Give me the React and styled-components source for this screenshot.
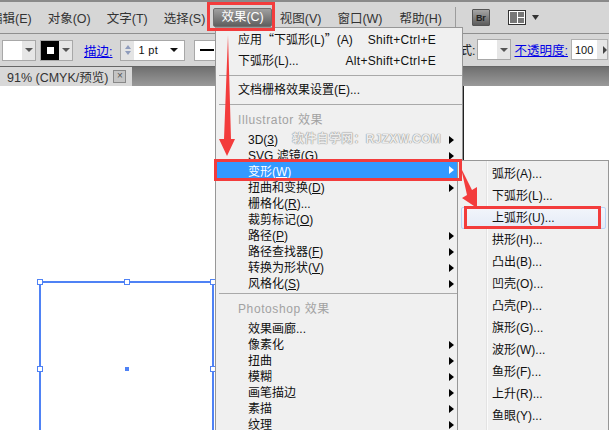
import React from "react";
import styled, { createGlobalStyle } from "styled-components";

const Global = createGlobalStyle`
  html, body { margin: 0; padding: 0; background: #fff; }
  body { font-family: "Liberation Sans", "Noto Sans CJK SC", sans-serif; font-size: 12px; color: #111; }
`;
const Page = styled.div`
  position: relative; width: 609px; height: 430px; overflow: hidden;
  display: flex; flex-direction: column; background: #fff;
`;
const MenuBar = styled.div`
  height: 31px; flex: 0 0 31px; border-top: 2px solid #8a8a8a; background: #d6d6d6; box-sizing: content-box;
  display: flex; align-items: center; color: #333; font-size: 12.5px;
`;
const MenuLabel = styled.span`
  margin-left: ${p => p.$gap}px; white-space: nowrap;
  ${p => p.$active && `
    background: linear-gradient(#a0a0a0, #5f5f5f); color: #fff; border-radius: 2px; line-height: 15px;
    padding: 1px 7px; margin-right: -7px; border: 1px solid #6f6f6f;`}
`;
const BarDivider = styled.i`
  width: 1px; height: 22px; background: #9c9c9c; margin-left: 13px; flex-shrink: 0;
`;
const BrBadge = styled.span`
  margin-left: 16px; width: 16px; height: 15px; border: 1px solid #555; border-radius: 1px; flex-shrink: 0;
  background: linear-gradient(#a5a5a5, #5c5c5c); color: #222; font: bold 9px "Liberation Sans", sans-serif;
  display: flex; align-items: center; justify-content: center;
`;
const LayoutIcon = styled.svg` margin-left: 18px; flex-shrink: 0; `;
const ControlBar = styled.div`
  height: 33px; flex: 0 0 33px; background: #d6d6d6; border-top: 1px solid #8f8f8f; box-sizing: border-box;
  display: flex; align-items: center;
`;
const Swatch = styled.div`
  display: flex; height: 21px; margin-left: ${p => p.$gap}px; border: 1px solid #a8a8a8; box-sizing: border-box; background: #e6e6e6; flex-shrink: 0;
`;
const SwatchFace = styled.div`
  width: ${p => p.$w}px; background: ${p => p.$black ? "#000" : "#fff"};
  display: flex; align-items: center; justify-content: center;
  &::after { content: ""; width: 7px; height: 7px; background: ${p => p.$black ? "#fff" : "transparent"}; }
`;
const SwatchArrow = styled.div`
  width: 13px; display: flex; align-items: center; justify-content: center;
  &::after { content: ""; border: 4px solid transparent; border-top: 4px solid #555; border-bottom: 0; }
`;
const LinkLabel = styled.span`
  color: #0000e6; text-decoration: underline; margin-left: ${p => p.$gap}px; font-size: 12.5px; white-space: nowrap;
`;
const Stepper = styled.div`
  margin-left: 8px; width: 65px; height: 21px; border: 1px solid #a8a8a8; background: #fff; box-sizing: border-box;
  display: flex; align-items: center; font-size: 11px; flex-shrink: 0;
`;
const StepButtons = styled.div`
  width: 13px; height: 100%; background: #e4e4e4; display: flex; flex-direction: column; align-items: center; justify-content: center; gap: 2px;
  &::before { content: ""; border: 3px solid transparent; border-bottom: 4px solid #8f9cbc; border-top: 0; }
  &::after { content: ""; border: 3px solid transparent; border-top: 4px solid #8f9cbc; border-bottom: 0; }
`;
const StepValue = styled.span` flex: 1; padding-left: 4px; letter-spacing: .3px; `;
const StepCaret = styled.i`
  margin-right: 6px; border: 4px solid transparent; border-top: 4px solid #111; border-bottom: 0;
`;
const StrokePreview = styled.div`
  margin-left: 9px; width: 60px; height: 21px; background: #fff; border: 1px solid #a8a8a8; box-sizing: border-box;
  display: flex; align-items: center; padding-left: 5px; flex-shrink: 0;
  &::after { content: ""; width: 14px; height: 2px; background: #000; }
`;
const RightControls = styled.div`
  position: absolute; left: 447px; top: 33px; width: 162px; height: 33px; display: flex; align-items: center; font-size: 12.5px;
`;
const StyleTail = styled.span` color: #222; white-space: nowrap; `;
const OpacityBox = styled.div`
  margin-left: 3px; width: 37px; height: 21px; border: 1px solid #b0b0b0; box-sizing: border-box; background: #e6e6e6;
  display: flex; align-items: center; font-size: 11px; flex-shrink: 0;
`;
const OpacityValue = styled.span` width: 25px; height: 100%; background: #fff; display: flex; align-items: center; padding-left: 3px; box-sizing: border-box; `;
const OpacityCaret = styled.i`
  margin-left: 6px; border: 4px solid transparent; border-left: 4px solid #444; border-right: 0;
`;
const TabBar = styled.div`
  height: 20px; flex: 0 0 20px; background: linear-gradient(#6f6f6f, #9a9a9a); display: flex; border-top: 1px solid #666; box-sizing: border-box;
`;
const DocTab = styled.div`
  width: 132px; background: #d8d8d8; display: flex; align-items: center; padding-left: 7px; box-sizing: border-box; color: #333; font-size: 12.5px; white-space: nowrap;
`;
const TabClose = styled.span`
  width: 11px; height: 11px; border: 1px solid #888; background: #c4c4c4; color: #555; font-size: 10px; line-height: 10px; text-align: center; margin-left: 5px; flex-shrink: 0;
`;
const Canvas = styled.div` position: relative; flex: 1; background: #fff; `;
const Selection = styled.div`
  position: absolute; left: 39px; top: 195px; width: 175px; height: 170px; box-sizing: border-box;
  border: solid #4f82f5; border-width: 2px 2px 0 2px;
`;
const Handle = styled.i`
  position: absolute; left: ${p => p.$x}px; top: ${p => p.$y}px; width: 4px; height: 4px;
  background: #fff; border: 1px solid #4f82f5;
`;
const CenterDot = styled.i`
  position: absolute; left: 125px; top: 281px; width: 4px; height: 4px; background: #4f82f5;
`;
const CanvasEdge = styled.i`
  position: absolute; left: 463px; top: 86px; width: 1px; height: 74px; background: #222;
`;
const Menu = styled.div`
  position: absolute; left: ${p => p.$x}px; top: ${p => p.$y}px; width: ${p => p.$w}px; height: ${p => p.$h}px;
  box-sizing: border-box; background: #f0f0f0; border: 1px solid #979797; border-bottom: 0;
  padding-top: ${p => p.$pad}px; display: flex; flex-direction: column;
  ${p => p.$gutter && `&::before { content: ""; position: absolute; left: 29px; top: 0; bottom: 0; width: 1px; background: #fbfbfb; box-shadow: -1px 0 0 #e3e3e3; }`}
`;
const Row = styled.div`
  position: relative; flex: 0 0 ${p => p.$h}px; min-height: 0; line-height: 16px; display: flex; align-items: center; padding-left: ${p => p.$indent}px;
  color: ${p => p.$active ? "#fff" : "#111"}; white-space: nowrap; font-size: 12px;
  & > * { position: relative; }
  ${p => p.$active && `&::before { content: ""; position: absolute; left: 0; right: 0; top: -2px; bottom: 2px; background: #3399ff; }`}
  ${p => p.$hover && `&::before { content: ""; position: absolute; left: 3px; right: 2px; top: 0; bottom: 0; background: linear-gradient(#f2f5fb, #e4ebf7); border: 1px solid #b8d4f6; border-radius: 2px; }`}
`;
const RowText = styled.span``;
const WideQuote = styled.span` font-family: "Noto Sans CJK SC", sans-serif; display: inline-block; width: 12px; text-align: ${p => p.$align}; `;
const Shortcut = styled.span` position: absolute !important; right: 26px; letter-spacing: .3px; `;
const SubCaret = styled.i`
  position: absolute !important; right: 8px; top: 50%; margin-top: ${p => p.$active ? -6 : -4}px;
  border: 4px solid transparent; border-left: 5px solid ${p => p.$active ? "#fff" : "#000"}; border-right: 0;
`;
const U = styled.span` text-decoration: underline; `;
const Separator = styled.div`
  height: 1px; margin: ${p => p.$top}px 0 0 3px; background: #a9a9a9; flex: 0 0 1px;
`;
const GroupLabel = styled.div`
  flex: 0 0 ${p => p.$h}px; min-height: 0; line-height: 16px; display: flex; align-items: center; padding: 2px 0 0 22px; box-sizing: border-box;
  color: #a2a2a2; letter-spacing: .6px; font-size: 12px;
`;
const Watermark = styled.span`
  position: absolute; left: 292px; top: 131px; color: #ececec; font-size: 12px; line-height: 17px; font-weight: bold; white-space: nowrap; letter-spacing: .3px;
  text-shadow: 0 0 1px #8a8a8a, 0 0 1px #8a8a8a;
`;
const RedBox = styled.div`
  position: absolute; left: ${p => p.$x}px; top: ${p => p.$y}px; width: ${p => p.$w}px; height: ${p => p.$h}px;
  box-sizing: border-box; border: 3px solid #f33c3c;
`;
const Annot = styled.svg` position: absolute; left: 0; top: 0; pointer-events: none; `;

const effects1 = [
  ["3D(", "3", ")", true], ["SVG 滤镜(", "G", ")", true], ["变形(", "W", ")", true, true], ["扭曲和变换(", "D", ")", true],
  ["栅格化(", "R", ")...", false], ["裁剪标记(", "O", ")", false], ["路径(", "P", ")", true], ["路径查找器(", "F", ")", true],
  ["转换为形状(", "V", ")", true], ["风格化(", "S", ")", true],
];
const effects2 = [["效果画廊...", false], ["像素化", true], ["扭曲", true], ["模糊", true], ["画笔描边", true], ["素描", true], ["纹理", true]];
const warp = ["弧形(A)...", "下弧形(L)...", "上弧形(U)...", "拱形(H)...", "凸出(B)...", "凹壳(O)...", "凸壳(P)...", "旗形(G)...", "波形(W)...", "鱼形(F)...", "上升(R)...", "鱼眼(Y)..."];

export default function App() {
  return (
    <Page>
      <Global />
      <MenuBar>
        <MenuLabel $gap={-10}>编辑(E)</MenuLabel>
        <MenuLabel $gap={16}>对象(O)</MenuLabel>
        <MenuLabel $gap={16}>文字(T)</MenuLabel>
        <MenuLabel $gap={16}>选择(S)</MenuLabel>
        <MenuLabel $gap={8} $active>效果(C)</MenuLabel>
        <MenuLabel $gap={15}>视图(V)</MenuLabel>
        <MenuLabel $gap={16}>窗口(W)</MenuLabel>
        <MenuLabel $gap={17}>帮助(H)</MenuLabel>
        <BarDivider />
        <BrBadge>Br</BrBadge>
        <LayoutIcon width="32" height="18" viewBox="0 0 32 18">
          <rect x=".5" y="1.500" width="17" height="14" fill="#fff" stroke="#333" />
          <rect x="2" y="3" width="7" height="11" fill="#777" />
          <rect x="10" y="3" width="6" height="5" fill="#777" />
          <rect x="10" y="9" width="6" height="5" fill="#777" />
          <path d="M24 6h7l-3.500 5z" fill="#333" />
        </LayoutIcon>
      </MenuBar>
      <ControlBar>
        <Swatch $gap={2}><SwatchFace $w={19} /><SwatchArrow /></Swatch>
        <Swatch $gap={4}><SwatchFace $w={18} $black /><SwatchArrow /></Swatch>
        <LinkLabel $gap={11}>描边:</LinkLabel>
        <Stepper><StepButtons /><StepValue>1 pt</StepValue><StepCaret /></Stepper>
        <StrokePreview />
      </ControlBar>
      <RightControls>
        <StyleTail>样式:</StyleTail>
        <Swatch $gap={2}><SwatchFace $w={19} /><SwatchArrow /></Swatch>
        <LinkLabel $gap={3}>不透明度:</LinkLabel>
        <OpacityBox><OpacityValue>100</OpacityValue><OpacityCaret /></OpacityBox>
      </RightControls>
      <TabBar>
        <DocTab>91% (CMYK/预览)<TabClose>×</TabClose></DocTab>
      </TabBar>
      <Canvas>
        <Selection />
        <Handle $x={37} $y={193} />
        <Handle $x={124} $y={193} />
        <Handle $x={210} $y={193} />
        <Handle $x={37} $y={280} />
        <Handle $x={210} $y={280} />
        <CenterDot />
      </Canvas>
      <CanvasEdge />

      <Menu $x={215} $y={27} $w={248} $h={403} $pad={1}>
        <Row $h={21} $indent={22}>
          <RowText>应用<WideQuote $align="right">“</WideQuote>下弧形(L)<WideQuote $align="left">”</WideQuote>(A)</RowText>
          <Shortcut>Shift+Ctrl+E</Shortcut>
        </Row>
        <Row $h={21} $indent={22}><RowText>下弧形(L)...</RowText><Shortcut>Alt+Shift+Ctrl+E</Shortcut></Row>
        <Separator $top={4} />
        <Row $h={28} $indent={22}><RowText>文档栅格效果设置(E)...</RowText></Row>
        <Separator $top={0} />
        <GroupLabel $h={27}>Illustrator 效果</GroupLabel>
        {effects1.map(([a, u, b, sub, active]) => (
          <Row key={a} $h={16} $indent={32} $active={active}>
            <RowText>{a}<U>{u}</U>{b}</RowText>
            {sub && <SubCaret $active={active} />}
          </Row>
        ))}
        <Separator $top={1} />
        <GroupLabel $h={27}>Photoshop 效果</GroupLabel>
        {effects2.map(([t, sub]) => (
          <Row key={t} $h={16} $indent={32}><RowText>{t}</RowText>{sub && <SubCaret />}</Row>
        ))}
      </Menu>
      <Watermark>软件自学网：RJZXW.COM</Watermark>

      <Menu $x={457} $y={160} $w={152} $h={270} $pad={2} $gutter>
        {warp.map((t, i) => (
          <Row key={t} $h={22} $indent={34} $hover={i === 2}><RowText>{t}</RowText></Row>
        ))}
      </Menu>

      <RedBox $x={207} $y={2} $w={68} $h={29} />
      <RedBox $x={214} $y={159} $w={248} $h={22} />
      <RedBox $x={464} $y={206} $w={137} $h={23} />
      <Annot width="609" height="430" viewBox="0 0 609 430">
        <path d="M228 35 L231 139 L235 139 L227 156 L219 139 L224 139 Z" fill="#f33c3c" />
        <path d="M461 168 L472 190 L477 187 L477 208 L462 198 L467 195 Z" fill="#f33c3c" />
      </Annot>
    </Page>
  );
}
